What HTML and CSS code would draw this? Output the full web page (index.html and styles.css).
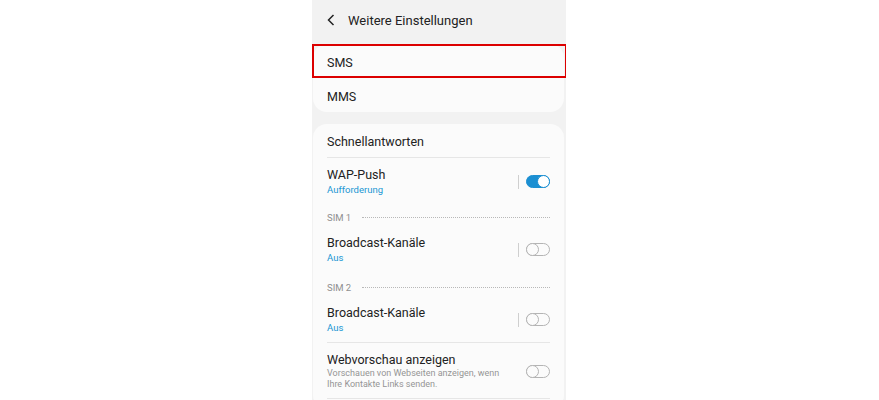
FILE: index.html
```html
<!DOCTYPE html>
<html lang="de">
<head>
    <meta charset="UTF-8">
    <meta name="viewport" content="width=device-width, initial-scale=1.0">
    <title>Weitere Einstellungen</title>
    <link rel="stylesheet" href="styles.css">
</head>
<body>
    <div class="phone">
        <div class="header">
            <svg class="back" width="8" height="12" viewBox="0 0 8 12">
                <path d="M6.5 1 L1.5 6 L6.5 11" fill="none" stroke="#222" stroke-width="1.5"/>
            </svg>
            <span class="header-title">Weitere Einstellungen</span>
        </div>

        <div class="card">
            <div class="row simple highlight">SMS</div>
            <div class="row simple">MMS</div>
        </div>

        <div class="card second">
            <div class="row simple tall">Schnellantworten</div>
            <div class="divider"></div>

            <div class="row item">
                <div class="text">
                    <div class="title">WAP-Push</div>
                    <div class="sub">Aufforderung</div>
                </div>
                <span class="vline"></span>
                <span class="toggle on"></span>
            </div>

            <div class="section">
                <span>SIM 1</span>
                <span class="dots"></span>
            </div>
            <div class="row item tight">
                <div class="text">
                    <div class="title">Broadcast-Kanäle</div>
                    <div class="sub">Aus</div>
                </div>
                <span class="vline"></span>
                <span class="toggle"></span>
            </div>

            <div class="section">
                <span>SIM 2</span>
                <span class="dots"></span>
            </div>
            <div class="row item tight last">
                <div class="text">
                    <div class="title">Broadcast-Kanäle</div>
                    <div class="sub">Aus</div>
                </div>
                <span class="vline"></span>
                <span class="toggle"></span>
            </div>
            <div class="divider"></div>

            <div class="row item">
                <div class="text">
                    <div class="title">Webvorschau anzeigen</div>
                    <div class="desc">Vorschauen von Webseiten anzeigen, wenn Ihre Kontakte Links senden.</div>
                </div>
                <span class="toggle"></span>
            </div>
            <div class="divider"></div>
        </div>
    </div>
</body>
</html>
```

FILE: styles.css
```css
body {
    margin: 0;
    background: #fff;
    font-family: Roboto, "Noto Sans", Arial, sans-serif;
    color: #222;
}

.phone {
    width: 254px;
    height: 400px;
    margin: 0 auto 0 312px;
    background: #f2f2f2;
    overflow: hidden;
}

.header {
    height: 40px;
    display: flex;
    align-items: center;
    padding-left: 15px;
    gap: 13px;
}

.back {
    display: block;
}

.header-title {
    font-size: 13px;
    color: #222;
}

.card {
    background: #fbfbfb;
    border-radius: 14px;
    margin: 4px 2px 0 1px;
}

.card.second {
    margin-top: 12px;
    padding-bottom: 10px;
}

.row {
    padding: 0 14px;
}

.simple {
    height: 34px;
    box-sizing: border-box;
    padding-top: 2px;
    display: flex;
    align-items: center;
    font-size: 12.5px;
}

.simple.tall {
    height: 33px;
    padding-top: 1px;
}

.highlight {
    position: relative;
}

.highlight::after {
    content: "";
    position: absolute;
    left: -1px;
    right: -3px;
    top: 0;
    bottom: 0;
    border: 2px solid #dc0000;
}

.divider {
    height: 1px;
    background: #e6e6e6;
    margin: 0 14px;
}

.item {
    display: flex;
    align-items: center;
    padding-top: 9px;
    padding-bottom: 8px;
}

.item.tight {
    padding-top: 5px;
    padding-bottom: 10px;
}

.item.tight.last {
    padding-bottom: 8px;
}

.text {
    flex: 1;
}

.title {
    font-size: 12.5px;
    line-height: 16px;
}

.sub {
    font-size: 9.5px;
    line-height: 13px;
    color: #2196d3;
}

.desc {
    font-size: 9px;
    line-height: 11px;
    color: #959595;
    padding-right: 20px;
}

.vline {
    width: 1px;
    height: 14px;
    background: #cfcfcf;
    margin-right: 7px;
}

.toggle {
    width: 24px;
    height: 13px;
    box-sizing: border-box;
    border: 1px solid #b4b4b4;
    border-radius: 7px;
    position: relative;
}

.toggle::after {
    content: "";
    position: absolute;
    top: -1px;
    left: -1px;
    width: 13px;
    height: 13px;
    box-sizing: border-box;
    border: 1px solid #b4b4b4;
    border-radius: 50%;
    background: #fbfbfb;
}

.toggle.on {
    background: #1b8fd2;
    border-color: #1b8fd2;
}

.toggle.on::after {
    left: auto;
    right: -1px;
    background: #fff;
    border: 1.5px solid #1b8fd2;
}

.section {
    height: 26px;
    display: flex;
    align-items: center;
    gap: 11px;
    padding: 0 14px;
    font-size: 9.5px;
    color: #8f8f8f;
}

.dots {
    flex: 1;
    border-top: 1px dotted #b8b8b8;
}
```
